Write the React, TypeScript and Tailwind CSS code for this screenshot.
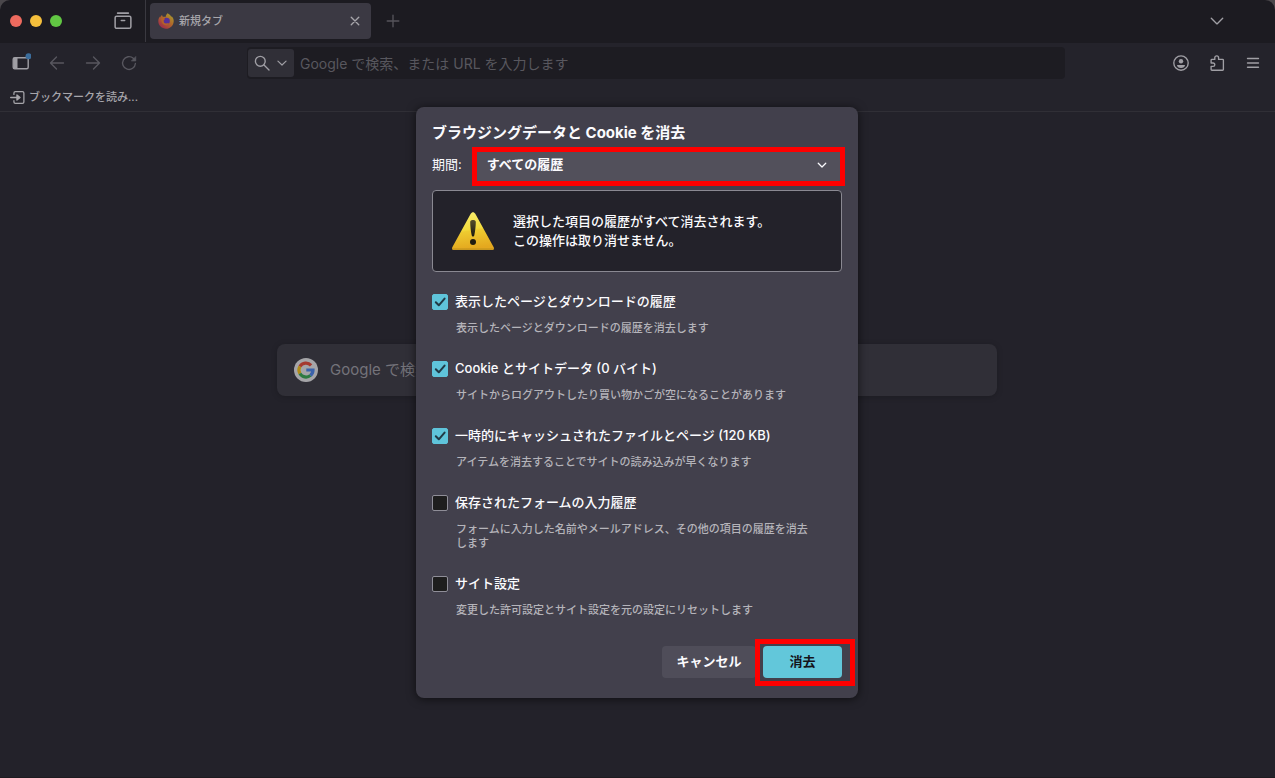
import React from "react";

const PLACEHOLDER = "Google で検索、または URL を入力します";

type Item = { id: string; label: string; description: string; checked: boolean };

const ITEMS: Item[] = [
  {
    id: "history",
    label: "表示したページとダウンロードの履歴",
    description: "表示したページとダウンロードの履歴を消去します",
    checked: true,
  },
  {
    id: "cookies",
    label: "Cookie とサイトデータ (0 バイト)",
    description: "サイトからログアウトしたり買い物かごが空になることがあります",
    checked: true,
  },
  {
    id: "cache",
    label: "一時的にキャッシュされたファイルとページ (120 KB)",
    description: "アイテムを消去することでサイトの読み込みが早くなります",
    checked: true,
  },
  {
    id: "forms",
    label: "保存されたフォームの入力履歴",
    description: "フォームに入力した名前やメールアドレス、その他の項目の履歴を消去します",
    checked: false,
  },
  {
    id: "site-settings",
    label: "サイト設定",
    description: "変更した許可設定とサイト設定を元の設定にリセットします",
    checked: false,
  },
];

function Icon({ children, className = "size-4" }: { children: React.ReactNode; className?: string }) {
  return (
    <svg
      viewBox="0 0 16 16"
      className={`shrink-0 ${className}`}
      fill="none"
      stroke="currentColor"
      strokeWidth="1.35"
      strokeLinecap="round"
      strokeLinejoin="round"
      aria-hidden="true"
    >
      {children}
    </svg>
  );
}

function ToolButton({ label, dim = false, children }: { label: string; dim?: boolean; children: React.ReactNode }) {
  return (
    <button
      type="button"
      aria-label={label}
      className={`flex h-8 w-9 items-center justify-center ${dim ? "text-[#58575f]" : "text-[#a09fa5]"}`}
    >
      {children}
    </button>
  );
}

function FirefoxLogo() {
  return (
    <svg viewBox="0 0 16 16" className="size-4 shrink-0" aria-hidden="true">
      <defs>
        <linearGradient id="fox" x1="0.9" y1="0.1" x2="0.2" y2="0.95">
          <stop offset="0" stopColor="#a79a2f" />
          <stop offset="0.45" stopColor="#b0682a" />
          <stop offset="1" stopColor="#a02a4b" />
        </linearGradient>
      </defs>
      <path
        d="M9.6.3c2.200 1.200 3.200 2.500 3.700 3.700.3-.2.3-.7.2-1.100C15 4.300 15.900 6.300 15.700 8.400 15.400 12.600 12 15.700 8 15.700S.3 12.500.3 8.300C.3 6.300 1 4.600 2 3.500c0 .4 0 .7.1 1 .4-1 1.100-1.900 2-2.500 0 .7.3 1.300.8 1.800 1.100-.1 2 .1 2.600.4C7.700 2.700 8.500 1.300 9.600.3z"
        fill="url(#fox)"
      />
      <circle cx="8.600" cy="8" r="3.200" fill="#56309a" />
      <path
        d="M3.200 5.600c1.500-.8 3-.6 4 .4-.4.600-1.500.7-1.600 1.400-.3 1.800 1 3.100 2.700 3.100 1.200 0 1.600-.6 2.500-.3-.8 1.600-2.300 2.300-3.900 1.900C4.400 11.400 3.100 8.700 3.200 5.600z"
        fill="#b3602b"
      />
    </svg>
  );
}

function GoogleLogo() {
  return (
    <svg viewBox="0 0 24 24" className="size-6 shrink-0" aria-hidden="true">
      <circle cx="12" cy="12" r="12" fill="#a5a5a8" />
      <g fill="none" strokeWidth="3.200">
        <path d="M17.100 7.300A7 7 0 0 0 5.900 8.500" stroke="#a5392f" />
        <path d="M5.900 8.500a7 7 0 0 0 0 7" stroke="#b08a16" />
        <path d="M5.900 15.500a7 7 0 0 0 10.600 1.900" stroke="#2d7a41" />
        <path d="M16.500 17.400A7 7 0 0 0 19 12H12.300" stroke="#3a62ab" />
      </g>
    </svg>
  );
}

function WarningIcon() {
  return (
    <svg viewBox="0 0 44 40" className="h-10 w-11 shrink-0" aria-hidden="true">
      <defs>
        <linearGradient id="warn" x1="0" y1="0" x2="0.15" y2="1">
          <stop offset="0" stopColor="#f8ee72" />
          <stop offset="0.5" stopColor="#f3dc3d" />
          <stop offset="0.55" stopColor="#eecb30" />
          <stop offset="1" stopColor="#e4a81f" />
        </linearGradient>
        <linearGradient id="mark" x1="0" y1="0" x2="0" y2="1">
          <stop offset="0" stopColor="#57512a" />
          <stop offset="1" stopColor="#19170f" />
        </linearGradient>
      </defs>
      <path
        d="M19.700 2.800c1.100-2.200 3.500-2.200 4.600 0L42.700 36.200c.8 1.500-.1 2.900-1.700 2.900H3c-1.600 0-2.500-1.400-1.700-2.900z"
        fill="url(#warn)"
      />
      <path d="M1.200 37.200c.2 1.200.8 1.900 1.800 1.900h38c1 0 1.600-.7 1.800-1.900z" fill="#b98e1c" opacity="0.600" />
      <path d="M19.200 11c0-2.600 5.600-2.600 5.600 0 0 4-.7 9.500-1.500 13.200-.2 1.800-2.400 1.800-2.600 0-.8-3.700-1.500-9.200-1.500-13.200z" fill="url(#mark)" />
      <circle cx="22" cy="31" r="3" fill="#201c10" />
    </svg>
  );
}

function TabStrip() {
  return (
    <header className="flex h-[43px] items-center rounded-t-[10px] bg-[#1c1b21] pr-[50px] pb-px">
      <div className="flex gap-2 pl-[10px]">
        <span className="size-3 rounded-full bg-[#ed6a5e]" />
        <span className="size-3 rounded-full bg-[#f4bf3c]" />
        <span className="size-3 rounded-full bg-[#61c743]" />
      </div>
      <button type="button" aria-label="Firefox View" className="ml-[52px] text-[#a09fa5]">
        <Icon className="size-[18px]">
          <path d="M3.200 1h9.600" />
          <path d="M2.300 3.700h11.400c.8 0 1.300.5 1.300 1.300v8c0 .9-.6 1.500-1.500 1.500h-11C1.600 14.500 1 13.900 1 13V5c0-.8.5-1.300 1.300-1.300zM6.500 7.500h3" />
        </Icon>
      </button>
      <div className="ml-[13px] h-full w-px bg-[#3a3940]" />
      <div className="ml-1 flex h-9 w-[221px] items-center gap-[5px] rounded bg-[#3b3943] pr-[11px] pl-2 text-[#a7a6ab]">
        <FirefoxLogo />
        <span className="flex-1 text-[11px] font-medium">新規タブ</span>
        <button type="button" aria-label="タブを閉じる">
          <Icon className="size-[10px]">
            <path d="M2 2l12 12M14 2L2 14" strokeWidth="2.200" />
          </Icon>
        </button>
      </div>
      <button type="button" aria-label="新しいタブを開く" className="ml-[14px] text-[#55545b]">
        <Icon>
          <path d="M8 2.200v11.600M2.200 8h11.600" />
        </Icon>
      </button>
      <button type="button" aria-label="タブを一覧表示" className="ml-auto text-[#a09fa5]">
        <Icon>
          <path d="M2.300 5.200L8 10.900l5.700-5.700" />
        </Icon>
      </button>
    </header>
  );
}

function NavBar() {
  return (
    <nav className="flex h-10 items-center bg-[#24232b] pr-1 pl-[3px]">
      <ToolButton label="サイドバーを表示">
        <svg viewBox="0 0 20 20" className="size-5" fill="none" stroke="currentColor" aria-hidden="true">
          <rect x="2.200" y="4.700" width="15" height="11" rx="1.500" strokeWidth="1.400" />
          <path d="M2.500 5h4v10.500h-4z" fill="currentColor" stroke="none" />
          <circle cx="17.500" cy="3.300" r="3" fill="#3b6d9c" stroke="none" />
        </svg>
      </ToolButton>
      <ToolButton label="戻る" dim>
        <Icon>
          <path d="M14.500 8h-13M7.500 2L1.500 8l6 6" />
        </Icon>
      </ToolButton>
      <ToolButton label="進む" dim>
        <Icon>
          <path d="M1.500 8h13M8.500 2l6 6-6 6" />
        </Icon>
      </ToolButton>
      <ToolButton label="再読み込み" dim>
        <Icon>
          <path d="M14.400 8.500A6.400 6.400 0 1 1 12.300 3.300L14 5" />
          <path d="M14.800 1.800V6h-4.200z" fill="currentColor" strokeWidth="0.600" />
        </Icon>
      </ToolButton>
      <div className="mr-[98px] ml-[100px] flex h-8 flex-1 items-center rounded bg-[#1d1c22] p-0.5 pl-px">
        <button
          type="button"
          aria-label="検索エンジンを選択"
          className="flex h-7 w-[46px] shrink-0 items-center justify-between rounded-[3px] bg-[#302f37] pr-[7px] pl-[6px] text-[#a09fa5]"
        >
          <Icon>
            <circle cx="6.300" cy="6.300" r="4.900" />
            <path d="M10 10l5 5" />
          </Icon>
          <Icon className="size-[10px]">
            <path d="M1.500 5L8 11.200 14.500 5" strokeWidth="1.900" />
          </Icon>
        </button>
        <input
          type="text"
          aria-label="検索またはアドレス入力"
          placeholder={PLACEHOLDER}
          className="min-w-0 flex-1 bg-transparent px-[6px] text-[14px] outline-none placeholder:text-[#58575e]"
        />
      </div>
      <ToolButton label="アカウント">
        <Icon>
          <circle cx="8" cy="8" r="7.200" />
          <circle cx="8" cy="6.200" r="2.200" fill="currentColor" stroke="none" />
          <path d="M4 10h8c0 1.800-1.700 3-4 3s-4-1.200-4-3z" fill="currentColor" stroke="none" />
        </Icon>
      </ToolButton>
      <ToolButton label="拡張機能">
        <Icon>
          <path d="M5.800 4.400V2.700a1.900 1.900 0 0 1 3.800 0v1.700h4c.5 0 .8.3.8.8v9.200c0 .5-.3.800-.8.800H2.900c-.5 0-.8-.3-.8-.8v-3h2a1.700 1.700 0 0 0 0-3.400h-2V5.200c0-.5.3-.8.8-.8z" />
        </Icon>
      </ToolButton>
      <ToolButton label="アプリケーションメニューを開く">
        <Icon>
          <path d="M2.500 3.500h11M2.500 8h11M2.500 12.200h11" />
        </Icon>
      </ToolButton>
    </nav>
  );
}

function BookmarksBar() {
  return (
    <div className="flex h-[29px] items-center border-b border-[#302f36] bg-[#24232b] pl-[10px]">
      <button type="button" className="flex items-center gap-1 text-[11px] font-medium text-[#a7a6ab]">
        <Icon className="size-[15px]">
          <path d="M4.200 4.700V3.200c0-.9.600-1.500 1.500-1.500h7.600c.9 0 1.500.6 1.500 1.500v9.600c0 .9-.6 1.500-1.500 1.500H5.700c-.9 0-1.500-.6-1.500-1.500v-1.500M.7 8h8" />
          <path d="M7.400 5.200L10.700 8l-3.300 2.800z" fill="currentColor" />
        </Icon>
        <span>ブックマークを読み...</span>
      </button>
    </div>
  );
}

function ClearDataDialog() {
  return (
    <form
      role="dialog"
      aria-labelledby="dialog-title"
      onSubmit={(e) => e.preventDefault()}
      className="w-[442px] rounded-lg bg-[#42404c] px-4 pt-[17px] pb-5 text-[13px] text-[#fbfbfe] shadow-[0_1px_10px_rgba(0,0,0,0.6)]"
    >
      <h1 id="dialog-title" className="text-[15px] leading-[18px] font-bold">
        ブラウジングデータと Cookie を消去
      </h1>
      <div className="mt-[7px] flex items-center gap-[10px]">
        <label htmlFor="period">期間:</label>
        <div className="relative flex-1">
          <select
            id="period"
            className="h-8 w-full appearance-none rounded bg-[#52505b] pl-[15px] text-[13px] font-bold outline-none"
          >
            <option>すべての履歴</option>
          </select>
          <Icon className="pointer-events-none absolute top-[11px] right-[15px] size-[10px]">
            <path d="M2 5.200l6 6 6-6" strokeWidth="2" />
          </Icon>
          <div className="pointer-events-none absolute -top-[2px] -right-[3px] -bottom-[5px] left-0 border-[5px] border-[#fe0000]" />
        </div>
      </div>

      <div className="mt-[9px] flex h-[82px] items-center gap-[18px] rounded border border-[#8a8992] bg-[#23222a] px-[18px]">
        <WarningIcon />
        <p className="leading-[19px] font-medium">
          選択した項目の履歴がすべて消去されます。
          <br />
          この操作は取り消せません。
        </p>
      </div>

      <div className="mt-5 flex flex-col gap-6">
        {ITEMS.map((item) => (
          <div key={item.id}>
            <div className="flex h-5 items-center gap-[7px]">
              <span className="grid size-4 shrink-0">
                <input
                  id={item.id}
                  type="checkbox"
                  defaultChecked={item.checked}
                  aria-describedby={`${item.id}-description`}
                  className="peer col-start-1 row-start-1 size-4 appearance-none rounded-[2px] border border-[#8f8e98] bg-[#1e1e1e] checked:border-[#5fc4da] checked:bg-[#5fc4da]"
                />
                <svg
                  viewBox="0 0 16 16"
                  className="pointer-events-none invisible col-start-1 row-start-1 size-4 peer-checked:visible"
                  fill="none"
                  stroke="#213a46"
                  strokeWidth="2"
                  strokeLinecap="round"
                  strokeLinejoin="round"
                  aria-hidden="true"
                >
                  <path d="M3.800 8.300l3 3 5.800-6.700" />
                </svg>
              </span>
              <label htmlFor={item.id} className="font-medium">
                {item.label}
              </label>
            </div>
            <p
              id={`${item.id}-description`}
              className="mt-[9px] mr-6 ml-6 text-[11px] leading-[14px] font-medium text-[#b5b4ba]"
            >
              {item.description}
            </p>
          </div>
        ))}
      </div>

      <div className="mt-[29px] flex justify-end gap-[7px] font-bold">
        <button type="button" className="h-8 w-[94px] rounded bg-[#4f4d59]">
          キャンセル
        </button>
        <div className="relative">
          <button type="submit" className="h-8 w-[79px] rounded bg-[#62c7da] text-[#15141a]">
            消去
          </button>
          <div className="pointer-events-none absolute -top-[7px] -right-[13px] -bottom-[8px] -left-[8px] border-[5px] border-[#fe0000]" />
        </div>
      </div>
    </form>
  );
}

export default function App() {
  return (
    <div
      className="relative flex min-h-screen flex-col bg-[#4a474b] font-[Inter,'Noto_Sans_CJK_JP',sans-serif]"
      lang="ja"
    >
      <TabStrip />
      <NavBar />
      <BookmarksBar />
      <main className="flex-1 border-b border-[#1e1b20] bg-[#23222a] pt-[232px] pr-[25px] pl-6">
        <label className="mx-auto flex h-[52px] max-w-[720px] items-center gap-3 rounded-lg bg-[#302f37] px-[17px] shadow-[0_1px_6px_rgba(0,0,0,0.2)]">
          <GoogleLogo />
          <input
            type="text"
            aria-label="ウェブを検索"
            placeholder={PLACEHOLDER}
            className="min-w-0 flex-1 bg-transparent text-[15px] outline-none placeholder:text-[#74737a]"
          />
        </label>
      </main>
      <div className="absolute inset-0 flex items-start justify-center pt-[107px] pr-px">
        <ClearDataDialog />
      </div>
    </div>
  );
}
